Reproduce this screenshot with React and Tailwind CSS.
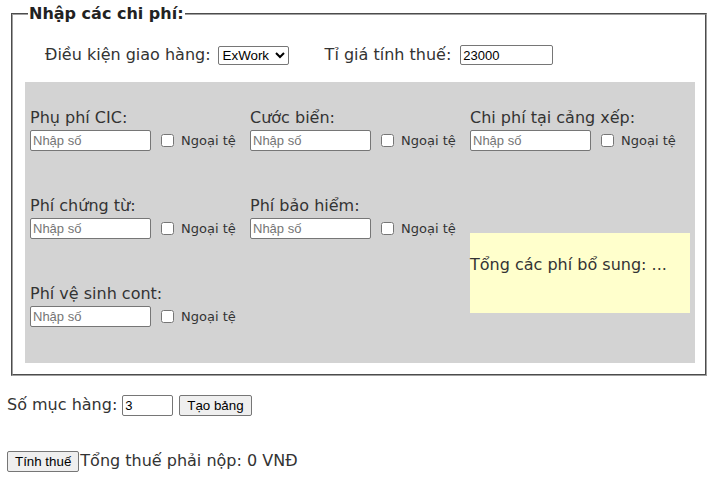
import { useState } from "react";

const fees = [
  { label: "Phụ phí CIC:" },
  { label: "Cước biển:" },
  { label: "Chi phí tại cảng xếp:" },
  { label: "Phí chứng từ:" },
  { label: "Phí bảo hiểm:" },
  null,
  { label: "Phí vệ sinh cont:" },
];

function FeeInput({ label }) {
  return (
    <div className="pt-[9px]">
      <div className="text-[16px] leading-[24px] text-[#333]">{label}</div>
      <div className="flex items-center">
        <input
          type="text"
          placeholder="Nhập số"
          className="w-[121px] h-[21px] border border-[#767676] rounded-[2px] bg-white px-[2px] text-[13px] font-['Liberation_Sans',sans-serif] placeholder:text-[#757575] outline-none"
        />
        <input type="checkbox" className="ml-[10px] w-[13px] h-[13px]" />
        <span className="ml-[7px] text-[13px] text-[#333]">Ngoại tệ</span>
      </div>
    </div>
  );
}

export default function App() {
  const [rows, setRows] = useState("3");

  return (
    <div className="font-['DejaVu_Sans',sans-serif] text-[#333] bg-white min-h-screen pl-[7px] pr-[8px]">
      <fieldset className="mt-[2px] ml-[4px] mr-[2px] min-w-0 border-2 [border-style:groove] border-[#a0a0a0] pl-[12px] pr-[10px] pb-[11px]">
        <legend className="font-bold text-[16px] leading-[24px] ml-[3px] px-[1px] text-[#222]">Nhập các chi phí:</legend>
        <div className="flex items-center h-[40px] mt-[9px] pl-[20px] text-[16px]">
          <span>Điều kiện giao hàng:</span>
          <select className="ml-[7px] w-[71px] h-[19px] border border-[#767676] rounded-[2px] bg-white text-[13.33px] font-['Liberation_Sans',sans-serif] text-black">
            <option>ExWork</option>
          </select>
          <span className="ml-[36px]">Tỉ giá tính thuế:</span>
          <input
            type="text"
            defaultValue="23000"
            className="ml-[9px] w-[93px] h-[20px] border border-[#767676] rounded-[2px] px-[2px] text-[13px] font-['Liberation_Sans',sans-serif] text-black outline-none"
          />
        </div>
        <div className="mt-[7px] bg-[#d3d3d3] px-[5px] pt-[15px] pb-[2px] grid grid-cols-[220px_220px_220px] grid-rows-[88px_88px_88px]">
          {fees.map((f, i) =>
            f ? <FeeInput key={i} label={f.label} /> : (
              <div key={i} className="row-span-2 self-center h-[80px] w-[220px] bg-[#ffffcc] flex items-center pb-[16px] text-[16px]">
                Tổng các phí bổ sung: ...
              </div>
            )
          )}
        </div>
      </fieldset>

      <div className="flex items-center mt-[17px] text-[16px]">
        <span>Số mục hàng:</span>
        <input
          type="text"
          value={rows}
          onChange={(e) => setRows(e.target.value)}
          className="ml-[5px] w-[51px] h-[21px] border border-[#767676] rounded-[2px] px-[2px] text-[13px] font-['Liberation_Sans',sans-serif] text-black outline-none"
        />
        <button className="ml-[6px] h-[21px] px-[7px] border border-[#767676] rounded-[2px] bg-[#efefef] text-[13.33px] font-['Liberation_Sans',sans-serif] text-black">
          Tạo bảng
        </button>
      </div>

      <div className="flex items-center mt-[32px] text-[16px]">
        <button className="h-[21px] px-[7px] border border-[#767676] rounded-[2px] bg-[#efefef] text-[13.33px] font-['Liberation_Sans',sans-serif] text-black">
          Tính thuế
        </button>
        <span className="ml-[1px]">Tổng thuế phải nộp: 0 VNĐ</span>
      </div>
    </div>
  );
}
